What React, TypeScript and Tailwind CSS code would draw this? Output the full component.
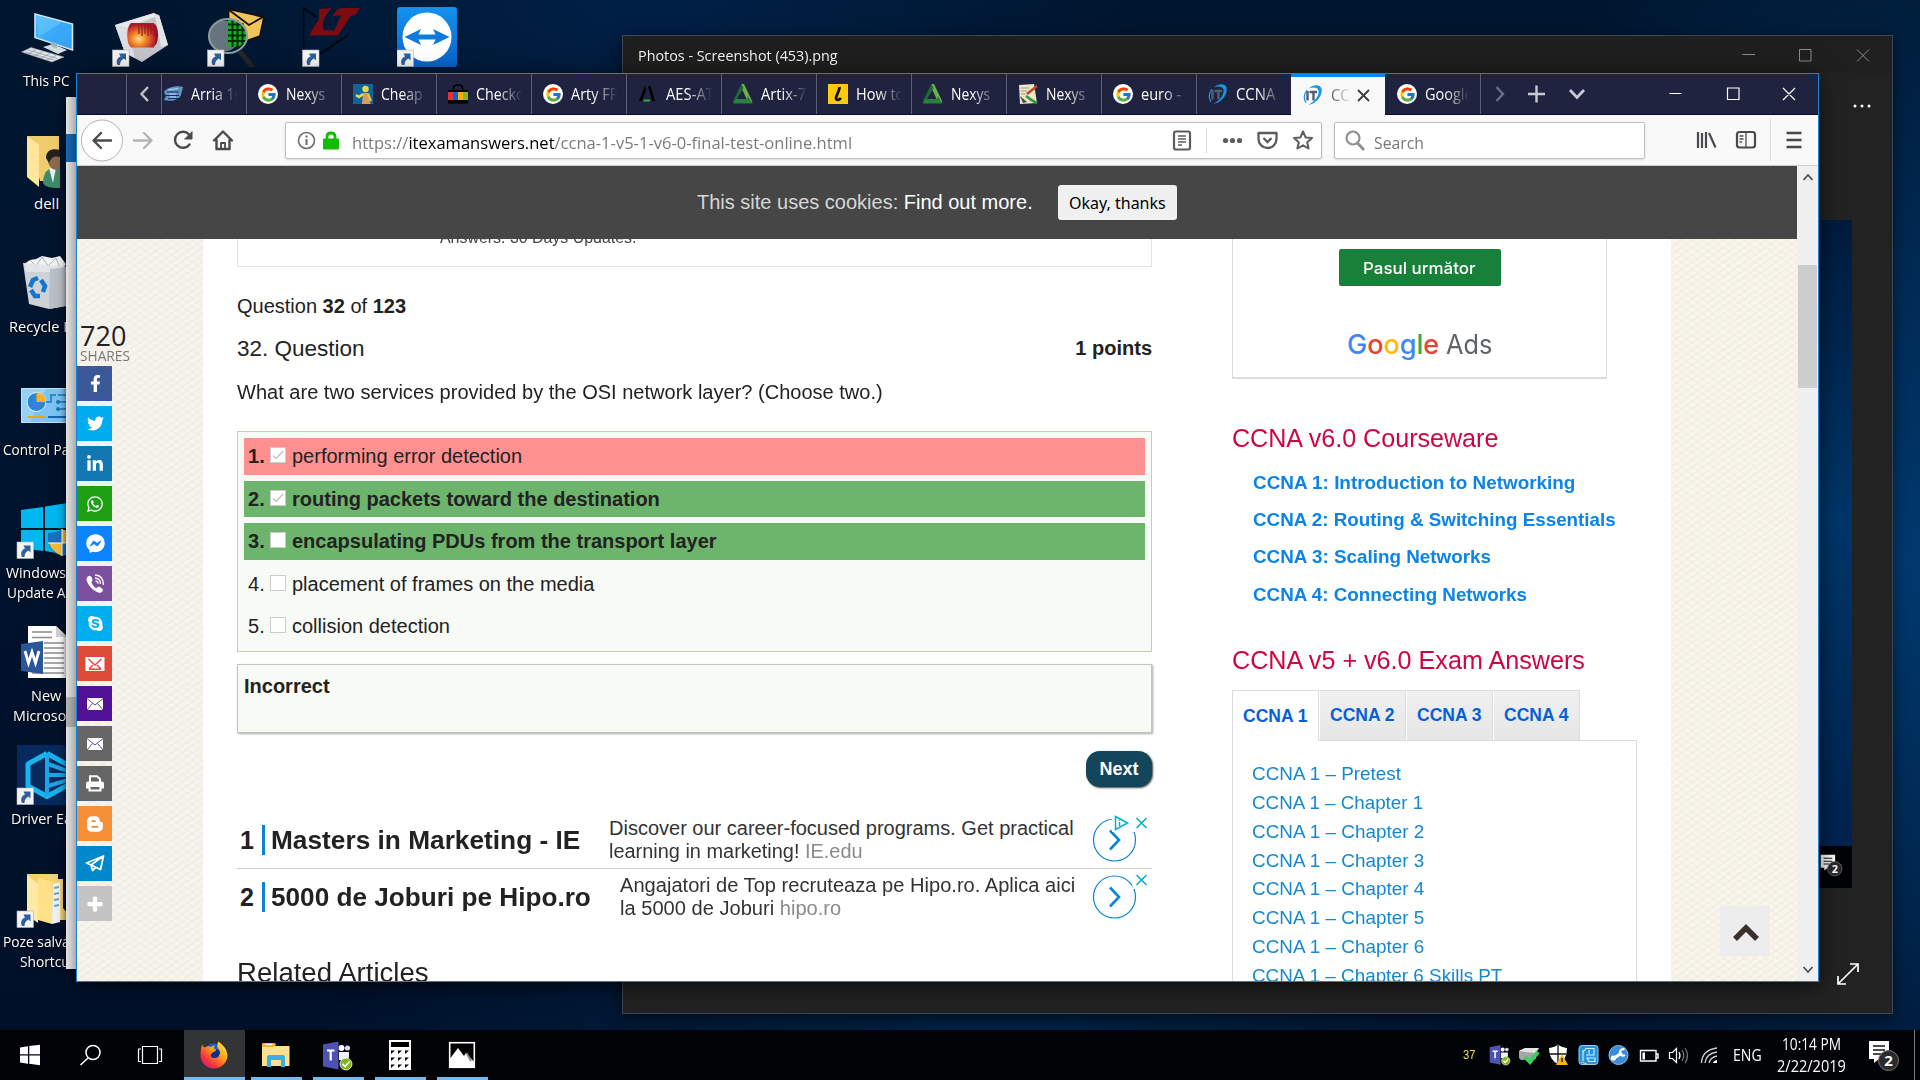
import { useLayoutEffect, useRef, useState, type ReactNode } from "react";
import { FcGoogle } from "react-icons/fc";
import {
  FaFacebookF, FaTwitter, FaLinkedinIn, FaWhatsapp, FaFacebookMessenger, FaSkype,
  FaBloggerB, FaPlus,
} from "react-icons/fa";

/* Text squeezed or stretched horizontally to an exact width */
function Fit({ w, className = "", children }: { w: number; className?: string; children: ReactNode }) {
  const ref = useRef<HTMLSpanElement>(null);
  const [s, setS] = useState(1);
  useLayoutEffect(() => {
    if (ref.current) setS(w / ref.current.offsetWidth);
  }, [w]);
  return (
    <span className={"inline-block shrink-0 whitespace-nowrap " + className} style={{ width: w }}>
      <span ref={ref} className="inline-block origin-left" style={{ transform: `scaleX(${s})` }}>{children}</span>
    </span>
  );
}

/* ---------- desktop icons ---------- */
const Shortcut = ({ x = 0, y = 0 }) => (
  <g transform={`translate(${x} ${y})`}>
    <rect width="16.5" height="16.5" fill="#f4f4f4" stroke="#b5b5b5" strokeWidth=".6" />
    <path d="M5 15 C3 11 5 7.500 8 6.500 L6.500 3.500 H13.500 V10.500 L11.500 8.500 C8.500 10 7.500 12 7.500 15Z" fill="#2f5f9f" />
  </g>
);

const ThisPC = () => (
  <svg width="56" height="64" viewBox="0 0 56 64">
    <defs><linearGradient id="pc" x1="0" y1="0" x2="1" y2="1"><stop offset="0" stopColor="#3db4ff" /><stop offset="1" stopColor="#35a0f0" /></linearGradient></defs>
    <path d="M17 10 L54.500 20 V46 L17 33.500Z" fill="url(#pc)" stroke="#cfe3f1" strokeWidth="1.600" />
    <path d="M18 11 L44 18 L20 33.500Z" fill="#7fd0ff" opacity=".45" />
    <path d="M25 43 L35 40 L49 46 L40 50Z" fill="#d3dde4" />
    <path d="M32 38 L39 40 V44 L34 43Z" fill="#9fb4c2" />
    <path d="M3.500 48 L13 43.500 L46 53 L34 58Z" fill="#e3e6e8" stroke="#8d979e" strokeWidth=".6" />
    <path d="M7 48 L36 56 M10 46 L39 54.500 M10 50 L18 45.500 M16 52 L25 47.500 M23 54 L32 49.500 M29 56 L38 51.500" stroke="#8a949b" strokeWidth=".7" />
  </svg>
);
const Comsol = () => (
  <svg width="60" height="64" viewBox="0 0 60 64">
    <defs><radialGradient id="cm" cx=".4" cy=".65" r=".6"><stop offset="0" stopColor="#ffe38a" /><stop offset=".4" stopColor="#f58a2a" /><stop offset="1" stopColor="#b3152e" /></radialGradient></defs>
    <path d="M4 18 L43 6 L48 8 L57 38 L31 55 L14 46Z" fill="#c3c4ca" />
    <path d="M4 18 L43 6 L46 9 L16 21Z" fill="#e9e9ec" /><path d="M4 18 L16 21 L24 51 L14 46Z" fill="#dedee2" /><path d="M44 9 L48 8 L57 38 L50 40Z" fill="#e3e3e6" />
    <ellipse cx="43" cy="28" rx="4" ry="11" fill="#8e1226" />
    <path d="M20 16 H43 Q47 28 43 40.500 H20 C15 37 15 20 20 16Z" fill="url(#cm)" />
    <path d="M28 17 V27 M31 17 V29 M34 17 V27 M37 17 V29 M40 17 V27 M43 18 V29" stroke="#8a1a20" strokeWidth="1.100" />
    <Shortcut x={1.5} y={43} />
  </svg>
);
const MailLens = () => (
  <svg width="60" height="64" viewBox="0 0 60 64">
    <path d="M22.500 2 L58 10 L54 29 L40 34 L22.500 30Z" fill="#f0c45a" stroke="#111" strokeWidth="1.800" strokeLinejoin="round" />
    <path d="M23 3 L43 18 L57 10" fill="none" stroke="#111" strokeWidth="1.800" />
    <circle cx="18" cy="29" r="15.500" fill="#66757d" />
    <path d="M22 13 C36 11 43 22 41 32 C38 39 30 41 22 39Z" fill="#12b41c" />
    <path d="M22 17.500 H36 M22 23 H40 M22 28.500 H41 M22 34 H40 M26.500 12 V40 M31.500 13 V40 M36.500 16 V38" stroke="#032a06" strokeWidth="2" />
    <ellipse cx="22" cy="29" rx="19" ry="17" fill="none" stroke="#8d9ba2" strokeWidth="2" />
    <path d="M31 45 L36 43 L49.500 60 H43Z" fill="#262626" />
    <Shortcut x={1.5} y={43} />
  </svg>
);
const LTspice = () => (
  <svg width="62" height="64" viewBox="0 0 62 64">
    <path d="M4.500 44 V1 L17.500 10 M49 28 L21 47" fill="none" stroke="#020509" strokeWidth="1.600" />
    <path d="M20 2 L33 1 C25 8 22 18 25 23 L35 23.500 L33 28.500 H10 L13 23 L20 12Z" fill="#7e0b0f" />
    <path d="M34 9 C37 3 40 1 44 1 H61 L56 8.500 H52 L39 28.500 H33 L42 8.500Z" fill="#7e0b0f" />
    <Shortcut x={3.5} y={43} />
  </svg>
);
const TeamViewer = () => (
  <svg width="60" height="60" viewBox="0 0 60 60">
    <defs><linearGradient id="tv" x1="0" y1="0" x2="0" y2="1"><stop offset="0" stopColor="#1292ee" /><stop offset="1" stopColor="#0a62c8" /></linearGradient></defs>
    <rect width="60" height="60" rx="3" fill="url(#tv)" />
    <circle cx="30" cy="30" r="24.500" fill="#fff" />
    <path d="M7.500 30 L24 22 L21.500 27.500 H38.500 L36 22 L52.500 30 L36 38 L38.500 32.500 H21.500 L24 38Z" fill="#0d7bdd" />
    <Shortcut x={0} y={43} />
  </svg>
);
const UserFolder = () => (
  <svg width="60" height="60" viewBox="0 0 60 60">
    <path d="M27 5 H59 V50 H40Z" fill="#f0cd6c" />
    <path d="M27 5 L39 14 V56 L27 46Z" fill="#ffe69a" />
    <path d="M43 52 C43 40 50 35 60 35 V57 C50 57 45 56 43 52Z" fill="#3f8b6c" />
    <path d="M49 37 L53 52 L56 37Z" fill="#e8f0f0" />
    <ellipse cx="56" cy="29" rx="8" ry="10" fill="#8b6a4e" />
    <path d="M46 27 C46 18 54 17 60 19 V26 C55 25 52 25 49 32Z" fill="#25211f" />
  </svg>
);
const Recycle = () => (
  <svg width="68" height="60" viewBox="0 0 68 60">
    <path d="M24 10 L30 6 L36 5 L42 2 L52 4 L60 2 L66 10 L62 18 H26Z" fill="#f1f3f4" />
    <path d="M30 6 L36 12 L42 3 L48 12 L56 4 L60 14" stroke="#a9b0b5" fill="none" />
    <path d="M23 9 L68 13 L66 52 L49 55 L29 50Z" fill="#dfe3e6" opacity=".92" />
    <path d="M50 15 L68 13 L66 52 L49 55Z" fill="#b9c0c5" />
    <path d="M30 33 L33 26 L38 24 M31 36 L35 42 L40 42 M41 26 L45 32 L43 38" stroke="#1276d0" strokeWidth="4.500" fill="none" />
  </svg>
);
const ControlPanel = () => (
  <svg width="68" height="60" viewBox="0 0 68 60">
    <rect x="21.500" y="9.500" width="60" height="34" fill="#7cc4f2" stroke="#bfe2f7" />
    <path d="M22 10 H46 L30 43 H22Z" fill="#a8daf8" opacity=".6" />
    <circle cx="36.500" cy="23" r="9.500" fill="#2b87cf" stroke="#e8f5fd" />
    <path d="M36.500 23 V13.500 A9.500 9.500 0 0 1 46 23Z" fill="#fcb022" />
    <path d="M46 23 H51 V16 H56 M58 16 H68 M58 23 H68 M58 30 H68" stroke="#1878bd" fill="none" strokeWidth="1.500" />
    <circle cx="58" cy="23" r="2" fill="#1878bd" /><circle cx="58" cy="30" r="2" fill="#1878bd" />
    <path d="M28 38 H46" stroke="#e9a61c" strokeWidth="2" /><path d="M48 38 H68" stroke="#1566b5" strokeWidth="2" />
  </svg>
);
const WinUpdate = () => (
  <svg width="68" height="60" viewBox="0 0 68 60">
    <path d="M21 10 L43 7 V28 H21Z M45 6.500 L68 3 V28 H45Z M21 30 H43 V51 L21 48Z M45 30 H68 V55 L45 51Z" fill="#00b7f0" />
    <path d="M48 33 Q56 33 62 29 V56 Q50 52 48 42Z" fill="#1c6fc0" /><path d="M62 29 Q66 31 68 32 V53 L62 56Z" fill="#f6bd3a" />
    <path d="M49 43 H62 V56 Q51 51 49 43Z" fill="#f6bd3a" /><path d="M62 43 H68 V53 L62 56Z" fill="#1c6fc0" /><path d="M62 29 V56 M48 43 H68" stroke="#fff" />
    <Shortcut x={17} y={42} />
  </svg>
);
const Word = () => (
  <svg width="68" height="60" viewBox="0 0 68 60">
    <path d="M28 3 H56 L68 15 V55 H28Z" fill="#fff" /><path d="M56 3 V14 H68Z" fill="#d4d4d4" />
    <path d="M32 9 H52 M32 14.500 H52 M44 20 H64 M44 25 H64 M44 30 H64 M44 35 H64 M44 40 H64 M44 45 H64 M32 50 H64" stroke="#8c8c8c" strokeWidth="1.500" />
    <path d="M21 21 L43 18 V51 L21 48Z" fill="#2a5699" />
    <path d="M25 28 L28.500 40 L32 29 L35.500 40 L39 28" fill="none" stroke="#fff" strokeWidth="2.800" />
  </svg>
);
const Driver = () => (
  <svg width="68" height="60" viewBox="0 0 68 60">
    <rect x="17" width="60" height="60" fill="#062a5e" />
    <path d="M47 8.500 L28 19 V41 L47 51.500 L68 40 M47 8.500 L68 20" fill="none" stroke="#18b4ee" strokeWidth="5" strokeLinejoin="round" />
    <path d="M47 9 V51 M48 19 L68 26 M48 30 H68 M48 41 L68 35" fill="none" stroke="#1aa7e8" strokeWidth="4" />
    <Shortcut x={17} y={43} />
  </svg>
);
const Poze = () => (
  <svg width="68" height="60" viewBox="0 0 68 60">
    <path d="M27 4 H58 V9 H63 V38 L68 44 V50 H44 L27 46Z" fill="#f3d274" />
    <path d="M27 5 L38 14 V53 L27 45Z" fill="#ffe9a6" /><path d="M38 8 L52 12 V54 L38 50Z" fill="#ffe18a" />
    <path d="M53 14 L60 12 V52 L52 54Z" fill="#eef3f7" /><path d="M54 18 L59 17 M54 24 L59 23 M54 30 L59 29 M54 36 L59 35" stroke="#69a5c9" strokeWidth="2" />
    <Shortcut x={17} y={41} />
  </svg>
);

const shortcuts: { icon: ReactNode; lines: [string, number, number][]; y: number; top: number }[] = [
  { icon: <UserFolder />, lines: [["dell", 28, 20]], y: 131, top: 193 },
  { icon: <Recycle />, lines: [["Recycle Bin", 9, 76]], y: 254, top: 316 },
  { icon: <ControlPanel />, lines: [["Control Panel", 3, 86]], y: 379, top: 439 },
  { icon: <WinUpdate />, lines: [["Windows 10", 6, 80], ["Update As…", 7, 76]], y: 500, top: 562 },
  { icon: <Word />, lines: [["New", 31, 30], ["Microsoft", 13, 63]], y: 623, top: 685 },
  { icon: <Driver />, lines: [["Driver Easy", 11, 75]], y: 745, top: 808 },
  { icon: <Poze />, lines: [["Poze salvate", 3, 79], ["Shortcut", 20, 55]], y: 870, top: 931 },
];

/* ---------- browser chrome ---------- */
const Aldec = () => <svg viewBox="0 0 20 20" className="size-5"><path d="M7 2 L1 17 H4 L8 6Z M10 2 H12.500 L17 17 H14Z" fill="#000" /><path d="M6 15.500 H12 V17.500 H5Z" fill="#2db24a" /></svg>;
const Arty = () => <svg viewBox="0 0 20 20" className="size-5"><path d="M8.500 0 H11 L19.500 18 H15 L9 5Z" fill="#6bb344" /><path d="M8.500 0 L0 17 L1 20 L10.500 4Z" fill="#1d6b39" /><path d="M0 19.500 L3 15 H14 L15 12 L19.500 19.500Z" fill="#2b7f41" /></svg>;
const ITLogo = () => (
  <svg viewBox="0 0 20 20" className="size-5">
    <path d="M6 3.500 C10 -.5 17 -1 18.500 3.500 C20 10 14 19 5 20 C12 17 16.500 10 15.500 5.500 C14.500 2 10 2 6 3.500Z" fill="#1597e0" />
    <path d="M4 5 C1 9 .5 14 3 18" stroke="#1597e0" strokeWidth="1.200" fill="none" />
    <path d="M4.500 6 V15.500 M6.500 7 H14 M10.500 7 V15.500" stroke="#555d70" strokeWidth="2.400" fill="none" />
  </svg>
);
const Chip = () => <svg viewBox="0 0 20 20" className="size-5"><path d="M1 8 C3 4 13 1 20 3 L18 11 C16 16 8 18 1 16 L3 12Z" fill="#5f93c6" /><path d="M4 8 H16 M2 11.500 H16 M5 14.500 H15" stroke="#1c2b55" strokeWidth="1.100" /><path d="M5 6 L15 4.500 M6 10 H13 M7 13 H13" stroke="#b9d8f2" strokeWidth="1.200" /></svg>;
const Lego = () => <svg viewBox="0 0 20 20" className="size-5"><rect width="20" height="20" fill="#07689f" /><circle cx="12.500" cy="5" r="3.200" fill="#f7d43b" /><path d="M10 9 H16 L17.500 20 H9Z" fill="#d99b5e" /><path d="M10 10 L6 13 L3 11" stroke="#f7d43b" strokeWidth="2.600" fill="none" /><path d="M15 10 L18 17" stroke="#f0c040" strokeWidth="2" /></svg>;
const Bag = () => <svg viewBox="0 0 20 20" className="size-5"><path d="M5.500 7 V4 Q6 1 8.500 1 H11.500 Q14 1 14.500 4 V7" fill="none" stroke="#000" strokeWidth="1.600" /><path d="M0 8 H5 V16 H0Z" fill="#e53238" /><path d="M5 8 H10 V16 H5Z" fill="#0064d2" /><path d="M10 8 H15 V16 H10Z" fill="#f5af02" /><path d="M15 8 H20 V16 H15Z" fill="#86b817" /><path d="M0 6 H20 V8 H0Z M0 16 H20 V19.500 H0Z" fill="#000" /></svg>;
const LIcon = () => <svg viewBox="0 0 20 20" className="size-5"><rect width="20" height="20" fill="#ffc90e" /><path d="M11.500 3 C12 5 8.500 11 8 14 C8 17 11.500 16 13 14" fill="none" stroke="#111" strokeWidth="2.800" /></svg>;
const Paper = () => <svg viewBox="0 0 20 20" className="size-5"><path d="M1 1 L16 0 L19 19 L2 20Z" fill="#ece5c8" /><path d="M3 4 H11 M3 7 H9 M3 10 H8" stroke="#a79f80" /><path d="M19 2 L9 10" stroke="#c0442f" strokeWidth="2.600" /><path d="M2 12 L9 18 L5 19Z" fill="#3f4a48" /><path d="M8 12 Q11 14 12 15 T19 19" stroke="#2f9b3a" strokeWidth="2.600" fill="none" /></svg>;
const G = () => <span className="flex size-5 items-center justify-center rounded-full bg-white"><FcGoogle size={17} /></span>;

const tabs: { icon: ReactNode; text: string; w: number }[] = [
  { icon: <G />, text: "Nexys", w: 39 },
  { icon: <Lego />, text: "Cheap", w: 42 },
  { icon: <Bag />, text: "Checko", w: 49 },
  { icon: <G />, text: "Arty FP", w: 47 },
  { icon: <Aldec />, text: "AES-AT", w: 48 },
  { icon: <Arty />, text: "Artix-7", w: 45 },
  { icon: <LIcon />, text: "How to", w: 48 },
  { icon: <Arty />, text: "Nexys", w: 39 },
  { icon: <Paper />, text: "Nexys", w: 39 },
  { icon: <G />, text: "euro -", w: 40 },
  { icon: <ITLogo />, text: "CCNA", w: 39 },
];

/* Tab titles dissolve over their last pixels instead of being cut */
const fade = "mask-[linear-gradient(to_right,#000_45%,#0003_90%,transparent)]";

function Tab({ icon, text, w }: { icon: ReactNode; text: string; w: number }) {
  return (
    <div className="flex h-full w-[95px] shrink-0 items-center border-l border-[#5d5f76] pl-[11px]">
      {icon}
      <div className={"ml-2 flex w-[46px] overflow-hidden text-white " + fade}><Fit w={w}>{text}</Fit></div>
    </div>
  );
}

function TabStrip() {
  return (
    <div className="flex h-[41px] border-b border-[#0c0c24] bg-[#202340] text-[16px] leading-6">
      <div className="w-[49px] shrink-0" />
      <div className="flex w-[35px] shrink-0 items-center justify-center border-l border-[#5d5f76]">
        <svg width="12" height="16" viewBox="0 0 12 16"><path d="M10 1 L3.500 8 L10 15" fill="none" stroke="#c0c1cc" strokeWidth="2.400" /></svg>
      </div>
      <div className="flex w-[85px] shrink-0 items-center border-l border-[#5d5f76] pl-px">
        <Chip /><div className={"ml-2 flex w-[46px] overflow-hidden text-white " + fade}><Fit w={52}>Arria 10</Fit></div>
      </div>
      {tabs.map((t, i) => <Tab key={i} {...t} />)}
      <div className="-mb-px flex w-[94px] shrink-0 items-center border-t-[3px] border-[#0a84ff] bg-[#f9f9fa] pb-[3px] pl-3">
        <ITLogo />
        <div className="ml-2 mt-px flex w-[20px] overflow-hidden text-[#555] mask-[linear-gradient(to_right,#000,transparent)]"><Fit w={39}>CCNA</Fit></div>
        <svg className="ml-[6px] mt-px" width="13" height="13" viewBox="0 0 13 13"><path d="M1 1 L12 12 M12 1 L1 12" stroke="#3c3c3d" strokeWidth="1.800" /></svg>
      </div>
      <div className="flex w-[96px] shrink-0 items-center border-r border-[#5d5f76] pl-3">
        <G /><div className={"ml-2 flex w-[44px] overflow-hidden text-white " + fade}><Fit w={48}>Google</Fit></div>
      </div>
      <svg width="337" height="40" viewBox="0 0 337 40" fill="none" className="shrink-0">
        <path d="M15.500 13 L22 20 L15.500 27" stroke="#6c6e84" strokeWidth="2.400" />
        <path d="M55.500 11.500 V28.500 M47 20 H64" stroke="#c8c9d2" strokeWidth="2.400" />
        <path d="M89 16 L96 23.500 L103 16" stroke="#c8c9d2" strokeWidth="2.800" />
        <path d="M188.500 19.500 H200.500 M246.500 14 H258 V25.500 H246.500Z M302 14 L314 26 M314 14 L302 26" stroke="#fff" strokeWidth="1.200" />
      </svg>
    </div>
  );
}

function Toolbar() {
  return (
    <div className="flex h-[51px] items-center border-b border-[#ccc] bg-[#f9f9fa] text-[17px]">
      <svg width="208" height="50" viewBox="0 0 208 50" fill="none" className="shrink-0">
        <circle cx="25" cy="25.500" r="20.500" fill="#fff" stroke="#b4b4b4" />
        <g stroke="#4a4a4c" strokeWidth="2.400" strokeLinecap="round" strokeLinejoin="round">
          <path d="M34 25.500 H17 M24 18 L16.500 25.500 L24 33" />
          <path d="M57 25.500 H74 M67 18 L74.500 25.500 L67 33" stroke="#b4b4b5" />
          <path d="M112.500 29.500 A8 8 0 1 1 112 19.500" /><path d="M115 17 V24 H108Z" fill="#4a4a4c" strokeWidth="1" />
          <path d="M137 25.500 L146 16.500 L155 25.500 M139.500 25 V34 H152.500 V25" /><path d="M144 34 V28 H148 V34" strokeWidth="1.800" />
        </g>
      </svg>
      <div className="flex h-[37px] w-[1037px] shrink-0 items-center rounded-[2px] border border-[#bfbfc0] bg-white shadow-sm">
        <svg width="66" height="35" viewBox="0 0 66 35" className="shrink-0">
          <circle cx="20.500" cy="17.500" r="8" fill="none" stroke="#6b6b6b" strokeWidth="1.600" /><path d="M20.500 16 V22 M20.500 12.500 V14.500" stroke="#6b6b6b" strokeWidth="2" />
          <rect x="37" y="15.500" width="16" height="11" rx="1" fill="#12bc00" /><path d="M41 17 V13.500 Q41 10 45 10 Q49 10 49 13.500 V17" fill="none" stroke="#12bc00" strokeWidth="2.800" />
        </svg>
        <Fit w={500} className="mt-[5px] text-[#7b7b7c]">https://<span className="text-black">itexamanswers.net</span>/ccna-1-v5-1-v6-0-final-test-online.html</Fit>
        <svg width="468" height="35" viewBox="1 0 468 35" fill="none" stroke="#5c5c5e" className="shrink-0">
          <rect x="323" y="8.500" width="16" height="18" rx="2" strokeWidth="2.200" /><path d="M327 13 H335 M327 16 H335 M327 19 H335 M327 22 H331" strokeWidth="1.400" />
          <path d="M355.500 5 V30" stroke="#d8d8d8" />
          <g fill="#5c5c5e" stroke="none"><circle cx="374.500" cy="17.500" r="2.600" /><circle cx="381.500" cy="17.500" r="2.600" /><circle cx="388.500" cy="17.500" r="2.600" /></g>
          <path d="M407.500 10 H425.500 V16 A9 9 0 0 1 407.500 16Z" strokeWidth="2.300" strokeLinejoin="round" /><path d="M412.500 15 L416.500 19 L420.500 15" strokeWidth="2.300" />
          <path d="M452 8.500 L454.600 14.400 L461 15 L456.200 19.300 L457.600 25.500 L452 22.300 L446.400 25.500 L447.800 19.300 L443 15 L449.400 14.400Z" strokeWidth="2" strokeLinejoin="round" />
        </svg>
      </div>
      <div className="ml-[12px] flex h-[37px] w-[311px] shrink-0 items-center rounded-[2px] border border-[#bfbfc0] bg-white shadow-sm">
        <svg width="39" height="35" viewBox="0 0 39 35" fill="none" stroke="#8f8f90"><circle cx="18" cy="15" r="6.500" strokeWidth="2.200" /><path d="M22.500 20 L29 27" strokeWidth="2.800" /></svg>
        <Fit w={50} className="mt-[5px] text-[#77777a]">Search</Fit>
      </div>
      <svg width="172" height="50" viewBox="0 0 172 50" fill="none" stroke="#4a4a4c">
        <path d="M53 17 V33 M57 18 V33 M61 17 V33 M64 18 L70.500 32.500" strokeWidth="2.200" />
        <rect x="92" y="17" width="18" height="15.500" rx="2.500" strokeWidth="2.200" /><path d="M101 17 V32 M94.500 21 H98.500 M94.500 24 H98.500 M94.500 27 H97" strokeWidth="1.300" />
        <path d="M125.500 4 V46" stroke="#dcdcdc" />
        <path d="M141.500 18 H156.500 M141.500 25 H156.500 M141.500 32 H156.500" strokeWidth="2.300" />
      </svg>
    </div>
  );
}

/* ---------- page ---------- */
const Gmail = () => <svg width="20" height="16" viewBox="0 0 20 16"><path d="M.5 1 H19.500 V15 H.5Z" fill="#fff" /><path d="M3.500 3 L10 9 L16.500 3 M4 13 L8 9 M16 13 L12 9 M4 13.200 H16" fill="none" stroke="#dd4b39" strokeWidth="1.500" /></svg>;
const Viber = () => <svg width="20" height="20" viewBox="0 0 20 20"><path d="M4 2 C6 1 7.500 5 7.500 6.500 C6.500 8 6 8.500 7.500 10.500 C9 13 10 14 11.500 14 L13.500 12.500 C15 13 18 15 18 16 C17 19 14.500 19.500 12 18 C7 15.500 3 11 1.500 6 C1 4 2.500 2.500 4 2Z" fill="#fff" /><path d="M10 1 Q18.500 1.500 18.500 11 M10 4 Q15.500 4.500 15.500 10 M10.500 7 Q12.800 7.300 13 9.500" fill="none" stroke="#fff" strokeWidth="1.400" /></svg>;
const Envelope = () => <svg width="16" height="12" viewBox="0 0 16 12"><rect width="16" height="12" fill="#fff" /><path d="M0 .5 L8 7 L16 .5 M0 12 L5.500 5.500 M16 12 L10.500 5.500" stroke="#59508a" fill="none" /></svg>;
const Printer = () => <svg width="18" height="17" viewBox="0 0 18 17"><path d="M4 7 V1.200 H11 L14 4 V7" fill="none" stroke="#fff" strokeWidth="2" /><path d="M2 6.500 H16 Q18 6.500 18 8.500 V13.500 H15.500 V16.500 H2.500 V13.500 H0 V8.500 Q0 6.500 2 6.500Z" fill="#fff" /><path d="M4.500 12 H13.500 V14.500 H4.500Z" fill="#666" /></svg>;
const Telegram = () => <svg width="20" height="17" viewBox="0 0 20 17" fill="none" stroke="#fff" strokeWidth="1.800" strokeLinejoin="round"><path d="M18.500 1 L1.500 8 L6 10 L15.500 14.500Z M18.500 1 L6 10 L7.500 15.500 L10.500 12.500" /></svg>;

const weave = "bg-[repeating-linear-gradient(35deg,#ebe7db44_0_2px,transparent_2px_6px),repeating-linear-gradient(-35deg,#ebe7db66_0_2px,transparent_2px_6px)]";

function ShareBar() {
  return (
    <div className={"flex w-[126px] shrink-0 flex-col bg-[#f7f4ed] font-['Open_Sans'] " + weave}>
      <div className="mt-[81px] flex h-[30px] items-center pl-[3px] text-[27px] leading-none text-[#222]"><Fit w={46}>720</Fit></div>
      <div className="flex h-[16px] items-start pl-[3px] text-[14px] leading-none text-[#777]"><Fit w={50} className="-mt-px">SHARES</Fit></div>
      <div className="flex w-[35px] flex-col gap-[5px] text-white *:flex *:h-[35px] *:items-center *:justify-center *:pl-px">
        <div className="bg-[#3b5998]"><FaFacebookF size={17} /></div>
        <div className="bg-[#00abf0]"><FaTwitter size={17} /></div>
        <div className="bg-[#1178b3]"><FaLinkedinIn size={18} /></div>
        <div className="bg-[#1fa014]"><FaWhatsapp size={18} /></div>
        <div className="bg-[#0b84ff]"><FaFacebookMessenger size={19} /></div>
        <div className="bg-[#7b519d]"><Viber /></div>
        <div className="bg-[#00aff0]"><FaSkype size={17} /></div>
        <div className="bg-[#dd4b39]"><Gmail /></div>
        <div className="bg-[#511295]"><Envelope /></div>
        <div className="bg-[#666]"><Envelope /></div>
        <div className="bg-[#666]"><Printer /></div>
        <div className="bg-[#f59038]"><FaBloggerB size={18} /></div>
        <div className="bg-[#0088cc]"><Telegram /></div>
        <div className="bg-[#c4c4c4]"><FaPlus size={16} strokeWidth={40} stroke="#fff" /></div>
      </div>
    </div>
  );
}

const answers = [
  { text: "performing error detection", box: "mt-[6px] h-[37px] pb-[2px] bg-[#ff9090]", bold: false, nb: true, checked: true },
  { text: "routing packets toward the destination", box: "mt-[6px] h-[36px] bg-[#6db46d]", bold: true, nb: true, checked: true },
  { text: "encapsulating PDUs from the transport layer", box: "mt-[6px] h-[37px] pb-[2px] bg-[#6db46d]", bold: true, nb: true, checked: false },
  { text: "placement of frames on the media", box: "mt-[5px] h-[37px]", bold: false, nb: false, checked: false },
  { text: "collision detection", box: "mt-[5px] h-[37px]", bold: false, nb: false, checked: false },
];

function Ad({ n, title, tw, lines, site, badge }: { n: number; title: string; tw: number; lines: [string, number][]; site: string; badge?: boolean }) {
  return (
    <div className="relative flex h-[56px] items-center text-[#222]">
      <div className="w-[25px] shrink-0 pl-[3px] text-[25px] font-bold leading-none">{n}</div>
      <div className="h-[30px] w-[3px] shrink-0 bg-[#0a86d0]" />
      <Fit w={tw} className="ml-[6px] mr-[29px] text-[26px] font-bold leading-none">{title}</Fit>
      <div className="text-[20px] leading-[23.500px] text-[#333]">
        <Fit w={lines[0][1]} className="block">{lines[0][0]}</Fit>
        <Fit w={lines[1][1]} className="block">{lines[1][0]} <span className="text-[#8a8a8a]">{site}</span></Fit>
      </div>
      <svg className="absolute left-[850px] top-0" width="66" height="56" viewBox="0 0 66 56" fill="none">
        <circle cx="27.500" cy="28" r="21" stroke="#0a86d0" strokeWidth="1.200" />
        <path d="M23 18.500 L32 28 L23 37.500" stroke="#0a86d0" strokeWidth="2.600" />
        <path d={badge ? "M25 2 H64 V20 H25Z" : "M42 2 H64 V20 H46Z"} fill="#fff" />
        <path d="M49.500 6 L59.500 16 M59.500 6 L49.500 16" stroke="#00aecd" strokeWidth="1.500" />
        {badge && <g stroke="#00aecd" strokeWidth="1.500"><path d="M28.500 4.500 L40.500 11 L28.500 17.500Z" /><path d="M32.500 10 V14 M32.500 7.500 V8.800" /></g>}
      </svg>
    </div>
  );
}

function Quiz() {
  return (
    <div className="w-[915px] shrink-0 text-[20px] leading-6 text-[#222]">
      <div className="flex h-[28px] items-start overflow-hidden border-x border-b border-[#e3e3e3] pl-[202px] text-[16px] leading-4 text-[#444]">
        <Fit w={196} className="-mt-[9px]">Answers. 30 Days Updates.</Fit>
      </div>
      <div className="mt-[19px] flex h-10 items-center"><Fit w={169}>Question <b>32</b> of <b>123</b></Fit></div>
      <div className="mt-[3px] flex h-10 items-center justify-between"><Fit w={128} className="text-[22.500px]">32. Question</Fit><b className="-mt-[2px]">1 points</b></div>
      <div className="mt-[3px] flex h-10 items-center"><Fit w={646}>What are two services provided by the OSI network layer? (Choose two.)</Fit></div>
      <div className="mt-[19px] h-[221px] border border-[#c3d1a3] bg-[#f8faf5] px-[6px]">
        {answers.map((a, i) => (
          <div key={i} className={"flex items-center pl-1 " + a.box}>
            <span className={a.nb ? "w-[22px] font-bold" : "w-[22px]"}>{i + 1}.</span>
            <span className="mb-[2px] flex size-[16px] items-center justify-center border border-[#ccc] bg-white">
              {a.checked && <svg width="12" height="12" viewBox="0 0 12 12"><path d="M1 6.500 L4.200 9.500 L11 2" fill="none" stroke="#c4c4c4" strokeWidth="1.500" /></svg>}
            </span>
            <span className={a.bold ? "ml-[6px] font-bold" : "ml-[6px]"}>{a.text}</span>
          </div>
        ))}
      </div>
      <div className="mt-[12px] h-[69px] border border-[#c4c4c4] bg-[#f8faf5] pl-[6px] pt-[9px] font-bold shadow-[1px_1px_2px_#aaa]">Incorrect</div>
      <div className="mt-[18px] flex h-9 justify-end">
        <div className="flex w-[66px] items-center justify-center rounded-[14px] bg-[#13455b] text-[18px] font-bold text-white shadow-[1px_1px_2px_#444]">Next</div>
      </div>
      <div className="mt-[25px] border-b border-[#ccc]">
        <Ad n={1} title="Masters in Marketing - IE" tw={309} lines={[["Discover our career-focused programs. Get practical", 465], ["learning in marketing!", 254]]} site="IE.edu" badge />
      </div>
      <Ad n={2} title="5000 de Joburi pe Hipo.ro" tw={320} lines={[["Angajatori de Top recruteaza pe Hipo.ro. Aplica aici", 455], ["la 5000 de Joburi", 221]]} site="hipo.ro" />
      <div className="mt-[28px] flex h-10 items-center"><Fit w={192} className="text-[27px]">Related Articles</Fit></div>
    </div>
  );
}

const courses: [string, number][] = [
  ["CCNA 1: Introduction to Networking", 322],
  ["CCNA 2: Routing & Switching Essentials", 363],
  ["CCNA 3: Scaling Networks", 238],
  ["CCNA 4: Connecting Networks", 274],
];
const chapters: [string, number][] = [
  ["Pretest", 149], ["Chapter 1", 171], ["Chapter 2", 172], ["Chapter 3", 172],
  ["Chapter 4", 172], ["Chapter 5", 172], ["Chapter 6", 172], ["Chapter 6 Skills PT", 250],
];

function Sidebar() {
  return (
    <div className="ml-[80px] w-[405px] shrink-0">
      <div className="flex h-[140px] w-[375px] flex-col items-center border-x border-b-2 border-[#dcdcdc] pt-[10px] font-['Inter']">
        <div className="flex h-[37px] w-[162px] items-center justify-center rounded-[2px] bg-[#188038] text-[16.500px] font-medium text-white"><Fit w={113}>Pasul următor</Fit></div>
        <div className="mt-[37px] flex h-[42px] items-center text-[27px] leading-none">
          <Fit w={92} className="font-medium">
            <span className="text-[#4285f4]">G</span><span className="text-[#ea4335]">o</span><span className="text-[#fbbc05]">o</span><span className="text-[#4285f4]">g</span><span className="text-[#34a853]">l</span><span className="text-[#ea4335]">e</span>
          </Fit>
          <Fit w={46} className="ml-[7px] text-[#5f6368]">Ads</Fit>
        </div>
      </div>
      <div className="mt-[39px] flex h-10 items-center text-[25px] text-[#d0043f]"><Fit w={266}>CCNA v6.0 Courseware</Fit></div>
      <div className="mt-[6px] pl-[21px] text-[19px] font-bold text-[#0a84ea]">
        {courses.map(([t, w]) => <div key={t} className="flex h-[37.400px] items-center"><Fit w={w}>{t}</Fit></div>)}
      </div>
      <div className="mt-[26px] flex h-10 items-center text-[25px] text-[#d0043f]"><Fit w={353}>CCNA v5 + v6.0 Exam Answers</Fit></div>
      <div className="relative z-10 mt-[10px] flex h-[51px] border-l border-[#dcdcdc] text-[17.500px] font-bold text-[#0560d8]">
        <div className="flex w-[86px] items-center justify-center border-r border-t border-[#dcdcdc] bg-white"><Fit w={65}>CCNA 1</Fit></div>
        {["CCNA 2", "CCNA 3", "CCNA 4"].map((t) => (
          <div key={t} className="flex w-[87px] items-center justify-center border border-l-white border-[#dcdcdc] bg-linear-to-b from-[#f0f0f0] to-[#e6e6e6]"><Fit w={65}>{t}</Fit></div>
        ))}
      </div>
      <div className="-mt-px h-[260px] border border-[#dcdcdc] pl-[19px] pt-[19.500px] text-[19px] text-[#1488d0]">
        {chapters.map(([t, w]) => <div key={t} className="flex h-[28.750px] items-center"><Fit w={w}>CCNA 1 – {t}</Fit></div>)}
      </div>
    </div>
  );
}

function Browser() {
  return (
    <div className="absolute left-[76px] top-[73px] flex h-[909px] w-[1743px] flex-col border border-[#1883d7] bg-white font-['Open_Sans',sans-serif] shadow-[0_4px_20px_#000a]">
      <TabStrip />
      <Toolbar />
      <div className="flex min-h-0 flex-1">
        <div className="flex w-[1720px] shrink-0 flex-col overflow-hidden font-['Liberation_Sans',sans-serif]">
          <div className="flex h-[73px] shrink-0 items-center bg-[#464646] text-[20px] text-[#d6d6d6]">
            <Fit w={336} className="-mt-[2px] ml-[620px]">This site uses cookies: <span className="text-white">Find out more.</span></Fit>
            <div className="ml-[25px] flex h-[35px] w-[119px] items-center justify-center rounded-[3px] bg-[#f0f0f0] font-['Noto_Sans'] text-[16px] text-black"><Fit w={97}>Okay, thanks</Fit></div>
          </div>
          <div className="flex min-h-0 flex-1 overflow-hidden">
            <ShareBar />
            <div className="flex w-[1468px] shrink-0 bg-white pl-[34px]">
              <Quiz />
              <Sidebar />
            </div>
            <div className={"flex-1 bg-[#f8f5ec] " + weave}>
              <div className="ml-[49px] mt-[667px] flex size-[50px] items-center justify-center bg-[#ededed] pl-px pt-[3px]">
                <svg width="28" height="20" viewBox="0 0 28 20"><path d="M3 16 L14 5 L25 16" fill="none" stroke="#3a302c" strokeWidth="5.500" /></svg>
              </div>
            </div>
          </div>
        </div>
        <div className="flex flex-1 flex-col items-center bg-[#f0f0f0]">
          <svg className="mt-[6px]" width="12" height="10" viewBox="0 0 12 10"><path d="M1.500 8 L6 3 L10.500 8" fill="none" stroke="#505050" strokeWidth="1.800" /></svg>
          <div className="mt-[83px] h-[123px] w-[19px] bg-[#cdcdcd]" />
          <svg className="mb-[6px] mt-auto" width="12" height="10" viewBox="0 0 12 10"><path d="M1.500 2 L6 7 L10.500 2" fill="none" stroke="#505050" strokeWidth="1.800" /></svg>
        </div>
      </div>
    </div>
  );
}

const Notif = ({ s }: { s: number }) => (
  <svg width={42 * s} height={36 * s} viewBox="0 0 42 36">
    <path d="M1 1 H21 V19 H11 L6 23 V19 H1Z" fill="#fff" /><path d="M5 6 H17 M5 10 H17 M5 14 H13" stroke="#111" strokeWidth="1.500" />
    <circle cx="20.500" cy="20.500" r="10" fill="#2b2b2b" stroke="#777" /><text x="20.500" y="26" textAnchor="middle" fontSize="15" fontWeight="bold" fill="#fff" fontFamily="Open Sans">2</text>
  </svg>
);

function Photos() {
  return (
    <div className="absolute left-[622px] top-[35px] flex h-[979px] w-[1271px] flex-col border border-[#3b4654] bg-[#222] shadow-[0_4px_16px_#0008]">
      <div className="flex h-[37px] items-center justify-between bg-[#1f1f1f] pl-[15px] text-[15px] text-[#f2f2f2]">
        <Fit w={200}>Photos - Screenshot (453).png</Fit>
        <svg width="160" height="37" viewBox="0 0 160 37" fill="none" stroke="#8b8b8b"><path d="M10.500 18.500 H23 M67.500 13.500 H79 V25 H67.500Z M125 13.500 L137 25.500 M137 13.500 L125 25.500" /></svg>
      </div>
      <div className="flex h-[147px] justify-end pr-[21px] pt-[29px]"><svg width="18" height="8" viewBox="0 0 18 8" fill="#fff"><circle cx="2" cy="4" r="1.500" /><circle cx="9" cy="4" r="1.500" /><circle cx="16" cy="4" r="1.500" /></svg></div>
      <div className="ml-auto mr-[40px] flex h-[668px] w-[40px] flex-col bg-linear-to-b from-[#001b3d] via-[#003669] via-45% to-[#00204a]">
        <div className="mt-auto flex h-[42px] items-center bg-[#010205] pl-[8px]"><Notif s={0.72} /></div>
      </div>
      <div className="mr-[32px] mt-auto flex h-[51px] justify-end"><svg width="24" height="24" viewBox="0 0 24 24" fill="none" stroke="#fff" strokeWidth="1.700"><path d="M2 22 L22 2 M14 2 H22 V10 M2 14 V22 H10" /></svg></div>
    </div>
  );
}

/* ---------- taskbar ---------- */
const Firefox = () => (
  <svg width="30" height="30" viewBox="0 0 30 30">
    <defs><linearGradient id="fx" x1=".9" y1="0" x2=".15" y2=".9"><stop offset="0" stopColor="#fff04a" /><stop offset=".45" stopColor="#ff9a1c" /><stop offset=".8" stopColor="#f5343c" /><stop offset="1" stopColor="#e01a7d" /></linearGradient></defs>
    <circle cx="15" cy="13.500" r="10" fill="#1560dd" /><circle cx="17" cy="15" r="5.500" fill="#0b2f8f" />
    <path d="M3.500 4 C3.500 6 4 7 6 7.500 C8 6 10 6 12 7 C13 6 15 5.500 16 6 C14 7.500 15 9 17 9.500 C17 12 13 12 12.500 14 C11 15 12 18 15 18 C18 18.500 20 17 20 15 C22 14 21 10 18.500 8 C18 5 18.500 3 19.500 1.500 C22 4 27.500 7 28.500 15 C28.500 23 22 28.500 15 28.500 C7 28.500 1 22 1.500 14 C1.500 10 2.500 6 3.500 4Z" fill="url(#fx)" />
  </svg>
);
const Folder = () => <svg width="30" height="28" viewBox="0 0 30 28"><path d="M1 3 H12 L14 5 H28.500 V25 H1Z" fill="#ffe08f" /><path d="M1 3 Q1 2 2 2 H13 Q15 2 15 4 L12 6 H1Z" fill="#f3b72e" /><path d="M4 3.500 H11" stroke="#fff" /><path d="M6 26 V16 Q6 14 8 14 H22 Q24 14 24 16 V26 H20 V19 H10 V26Z" fill="#35b0e8" /></svg>;
const Teams = ({ s = 1 }) => <svg width={31 * s} height={31 * s} viewBox="0 0 31 31"><path d="M17 12 H27 V17 Q26 20 22 20 H17Z" fill="#f1f1fa" /><circle cx="19.500" cy="8" r="3" fill="#fff" /><circle cx="25.500" cy="8" r="2.600" fill="#d8d8f0" /><path d="M1 4.500 L16.500 1.500 V29.500 L1 26.500Z" fill="#4f52b2" /><path d="M5 10.500 H12.500 M8.700 10.500 V20.500" stroke="#fff" strokeWidth="2.200" /><circle cx="24" cy="24" r="6" fill="#7cb813" stroke="#fff" strokeWidth=".8" /><path d="M20.500 24 L23 26.500 L27.500 21.500" stroke="#fff" strokeWidth="1.800" fill="none" /></svg>;
const Calc = () => <svg width="24" height="32" viewBox="0 0 24 32"><path d="M1 1 H23 V31 H1Z" fill="#fff" /><path d="M3 3 H21 V8 H3Z" fill="#000" /><path d="M3 11.500 h4 l-4 3.500z M10 11.500 h4 l-4 3.500z M17 11.500 h4 l-4 3.500z M3 18.500 h4 l-4 3.500z M10 18.500 h4 l-4 3.500z M17 18.500 h4 l-4 3.500z M3 25.500 h4 l-4 3.500z M10 25.500 h4 l-4 3.500z M17 25.500 h4 l-4 3.500z" fill="#000" /></svg>;
const PhotoApp = () => <svg width="28" height="28" viewBox="0 0 28 28"><rect x="1.700" y="1.700" width="24.600" height="24.600" fill="#000" stroke="#fff" strokeWidth="1.600" /><path d="M1 19 L10 7 L16 15 L18 12 L27 22 V27 H1Z" fill="#fff" /><path d="M18.500 12 L23 20" stroke="#888" strokeWidth="2" fill="none" /></svg>;

function Taskbar() {
  return (
    <div className="absolute bottom-0 left-0 flex h-[50px] w-full items-stretch justify-between bg-[#010307] text-[16px] text-white">
      <div className="flex">
        <div className="flex w-[184px] items-center">
          <svg width="184" height="50" viewBox="0 0 184 50" fill="none">
            <path d="M20 17.500 L28 16.200 V24.300 H20Z M29.300 16 L40 14.800 V24.300 H29.300Z M20 25.600 H28 V33.700 L20 32.500Z M29.300 25.600 H40 V35.200 L29.300 33.800Z" fill="#fff" />
            <circle cx="93" cy="22.500" r="7" stroke="#fff" strokeWidth="1.500" /><path d="M88 28 L80.500 35" stroke="#fff" strokeWidth="1.500" />
            <path d="M142.500 16.500 H157.500 V33.500 H142.500Z M141 19 H138.500 V31.500 H141 M159 19 H161.500 V31.500 H159" stroke="#fff" strokeWidth="1.200" />
          </svg>
        </div>
        <div className="flex w-[61px] items-center justify-center border-b-[3px] border-[#76b9ed] bg-[#333436] pr-[2px] pt-[2px]"><Firefox /></div>
        {[<Folder key="a" />, <Teams key="b" />, <Calc key="c" />, <PhotoApp key="d" />].map((ic, i) => (
          <div key={i} className="ml-[6px] mr-[5px] flex w-[51px] items-center justify-center border-b-[3px] border-[#76b9ed] pr-[2px] pt-[3px]">{ic}</div>
        ))}
      </div>
      <div className="flex items-center">
        <span className="w-[26px] font-['Liberation_Sans'] text-[12px] text-[#f2e23a]"><Fit w={12}>37</Fit></span>
        <Teams s={0.7} />
        <svg width="238" height="50" viewBox="0 0 238 50" fill="none">
          <path d="M8 21 L14 18 H28 L25 23 V29 L10 30 L8 28Z" fill="#a3a6a8" /><path d="M8 21 L14 18 H28 L24 23Z" fill="#e4e4e4" /><path d="M14 27 L19 32 L27 22" stroke="#35d25c" strokeWidth="4" />
          <path d="M38 18 Q44 17 47 14.500 Q50 17 56 18 Q56 30 47 34 Q38 30 38 18Z" fill="#fff" /><path d="M47 15 V34 M38 24 H55" stroke="#111" strokeWidth="1.300" /><path d="M51 24 L57 35 H45Z" fill="#fcb316" /><path d="M51 28 V32" stroke="#222" strokeWidth="1.500" />
          <rect x="68" y="15.500" width="19" height="19" rx="3" fill="#2494dc" stroke="#8ed0f4" /><path d="M71.500 23 L75 18.500 H83 V25 H75 M72 20 V31 M76 28 H84 V31.500 H78Z M78 20 V24" stroke="#d8f0ff" strokeWidth="1.100" /><path d="M70 32 L76 34" stroke="#f1d66a" />
          <circle cx="107.500" cy="25" r="9.500" fill="#3a8dd6" stroke="#8cc1ec" /><path d="M103 28 L111 23" stroke="#fff" strokeWidth="3.200" /><circle cx="102.500" cy="28" r="2.600" fill="#fff" /><path d="M113.500 19.500 A3.200 3.200 0 1 0 114 25" stroke="#fff" strokeWidth="2" />
          <path d="M129.500 20.500 H145 V31 H129.500Z M145.500 24 H147 V28 H145.500" stroke="#fff" strokeWidth="1.400" /><path d="M131.500 22.500 H134 V29.500 H131.500Z" fill="#fff" />
          <path d="M158.500 22.500 H161.500 L165.500 18.500 V32.500 L161.500 28.500 H158.500Z M168 22 Q170 25.500 168 29" stroke="#fff" strokeWidth="1.200" /><path d="M171 20 Q174.500 25.500 171 31 M174 18 Q179 25.500 174 33" stroke="#777" strokeWidth="1.200" />
          <path d="M190.500 33 Q191 20 206 18 M194 33 Q195 23.500 206 22 M198 33 Q199 27.500 206 26" stroke="#ccc" strokeWidth="1.300" /><path d="M202 33 Q202.500 30.500 206 30 V33Z" fill="#fff" />
        </svg>
        <div className="-ml-[16px] flex items-center">
          <Fit w={29}>ENG</Fit>
          <div className="ml-[15px] flex w-[69px] flex-col items-center leading-[22.500px]"><Fit w={59}>10:14 PM</Fit><Fit w={69}>2/22/2019</Fit></div>
          <div className="ml-[22px] mt-[5px] w-[46px]"><Notif s={1} /></div>
          <div className="mr-[5px] h-[50px] w-px bg-[#7b7d80]" />
        </div>
      </div>
    </div>
  );
}

export default function App() {
  return (
    <div className="relative h-[1080px] w-[1920px] overflow-hidden bg-[#001a38] bg-[radial-gradient(ellipse_500px_700px_at_1900px_560px,#003a70,transparent),radial-gradient(ellipse_700px_160px_at_1000px_1040px,#002347,transparent),radial-gradient(ellipse_500px_200px_at_650px_0px,#002047,transparent),linear-gradient(180deg,#00162f,#001029)] font-['Open_Sans',sans-serif] text-[15px] leading-5">
      <div className="absolute left-[18px] top-[4px]"><ThisPC /></div>
      <div className="absolute left-[111px] top-[7px]"><Comsol /></div>
      <div className="absolute left-[206px] top-[7px]"><MailLens /></div>
      <div className="absolute left-[299px] top-[7px]"><LTspice /></div>
      <div className="absolute left-[397px] top-[7px]"><TeamViewer /></div>
      <div className="absolute left-[23px] top-[70px] text-white [text-shadow:1px_1px_2px_#000]"><Fit w={47}>This PC</Fit></div>
      {shortcuts.map((d) => (
        <div key={d.top}>
          <div className="absolute left-0 w-[66px] overflow-hidden" style={{ top: d.y }}>{d.icon}</div>
          {d.lines.map(([t, x, w], i) => (
            <div key={t} className="absolute text-white [text-shadow:1px_1px_2px_#000]" style={{ left: d.top === 193 ? x + 6 : x, top: d.top + i * 20 }}><Fit w={d.top === 193 ? 25 : w}>{t}</Fit></div>
          ))}
        </div>
      ))}
      <div className="absolute left-[66px] top-[97px] flex h-[872px] w-[60px] flex-col bg-white shadow-[0_0_6px_#0009]">
        <div className="mt-[37px] h-[28px] bg-[#1976c8]" />
        <div className="mt-[535px] h-[30px] bg-[#cdcdcd]" />
      </div>
      <Photos />
      <Browser />
      <Taskbar />
    </div>
  );
}
